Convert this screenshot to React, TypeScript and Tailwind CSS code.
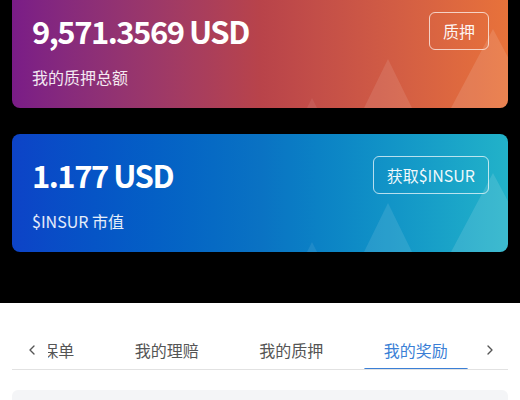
import React from "react";
import { ChevronLeft, ChevronRight } from "lucide-react";

function Triangles() {
  return (
    <svg
      className="absolute inset-0 pointer-events-none"
      width="496"
      height="118"
      viewBox="0 0 496 118"
    >
      <polygon points="376,69 352,118 400,118" fill="rgba(255,255,255,0.1)" />
      <polygon points="300,108 295,118 305,118" fill="rgba(255,255,255,0.08)" />
      <polygon points="481,39 439,118 523,118" fill="rgba(255,255,255,0.12)" />
    </svg>
  );
}

function Card({
  className,
  amount,
  label,
  button,
}: {
  className: string;
  amount: string;
  label: string;
  button: string;
}) {
  return (
    <div className={"relative h-[118px] rounded-[8px] overflow-hidden " + className}>
      <Triangles />
      <div className="relative flex justify-between pl-5 pr-[19px] pt-[22px]">
        <div className="flex flex-col">
          <div className="text-[31px] leading-[40px] font-semibold text-white mt-[-1px] tracking-[-1.5px]">
            {amount}
          </div>
          <div className="text-[16px] leading-[20px] text-white/90 mt-[16px]">{label}</div>
        </div>
        <div className="h-[38px] px-[13px] flex items-center border border-white/70 rounded-[6px] text-[16px] text-white/95">
          {button}
        </div>
      </div>
    </div>
  );
}

export default function App() {
  const tabs = ["我的保单", "我的理赔", "我的质押", "我的奖励"];
  return (
    <div className="w-[520px] h-[400px] overflow-hidden bg-black font-['Noto_Sans_CJK_SC',sans-serif]">
      <div className="px-3">
        <div className="mt-[-10px]">
          <Card
            className="bg-linear-to-r from-[#7a1c87] via-[#b8434a] to-[#e8723a]"
            amount="9,571.3569 USD"
            label="我的质押总额"
            button="质押"
          />
        </div>
        <div className="mt-[26px]">
          <Card
            className="bg-linear-to-r from-[#0d43c7] via-[#0a72c3] to-[#22b2c9]"
            amount="1.177 USD"
            label="$INSUR 市值"
            button="获取$INSUR"
          />
        </div>
      </div>
      <div className="mt-[51px] bg-white h-[120px] pt-[27px]">
        <div className="mx-3 flex items-center h-[40px] border-b border-[#e2e2e2]">
          <div className="w-[36px] flex justify-end pr-[8px] text-[#555]">
            <ChevronLeft size={16} strokeWidth={2} />
          </div>
          <div className="w-[430px] h-full overflow-hidden">
            <div className="flex h-full ml-[-68px]">
              {tabs.map((t, i) => (
                <div
                  key={t}
                  className={
                    "relative shrink-0 w-[124.5px] h-full flex items-center justify-center text-[16px] " +
                    (i === 3 ? "text-[#3b7fd6]" : "text-[#555]")
                  }
                >
                  {t}
                  {i === 3 && (
                    <div className="absolute bottom-[-2px] left-[10px] right-[10px] h-[3px] bg-[#3b7fd6] rounded-full" />
                  )}
                </div>
              ))}
            </div>
          </div>
          <div className="w-[30px] flex pl-[4px] text-[#555]">
            <ChevronRight size={16} strokeWidth={2} />
          </div>
        </div>
        <div className="mx-3 mt-[20px] h-[40px] bg-[#f4f5f7] rounded-t-[6px]" />
      </div>
    </div>
  );
}
